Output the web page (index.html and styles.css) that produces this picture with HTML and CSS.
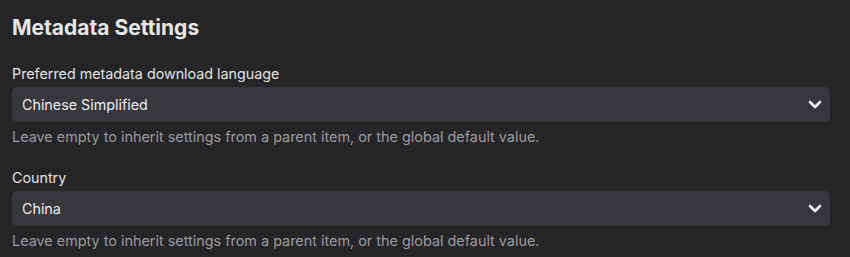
FILE: index.html
```html
<!DOCTYPE html>
<html lang="en">
<head>
    <meta charset="UTF-8">
    <title>Metadata Settings</title>
    <link rel="stylesheet" href="styles.css">
</head>
<body>
    <div class="settings">
        <h2 class="settings-title">Metadata Settings</h2>

        <div class="field">
            <label class="field-label" for="language">Preferred metadata download language</label>
            <div class="select-wrap">
                <select id="language" class="field-select">
                    <option>Chinese Simplified</option>
                </select>
                <svg class="select-arrow" width="14" height="9" viewBox="0 0 14 9">
                    <path d="M2 2 L7 7 L12 2" fill="none" stroke="#f2f2f2" stroke-width="2.6" stroke-linecap="round" stroke-linejoin="round"/>
                </svg>
            </div>
            <div class="field-help">Leave empty to inherit settings from a parent item, or the global default value.</div>
        </div>

        <div class="field">
            <label class="field-label" for="country">Country</label>
            <div class="select-wrap">
                <select id="country" class="field-select">
                    <option>China</option>
                </select>
                <svg class="select-arrow" width="14" height="9" viewBox="0 0 14 9">
                    <path d="M2 2 L7 7 L12 2" fill="none" stroke="#f2f2f2" stroke-width="2.6" stroke-linecap="round" stroke-linejoin="round"/>
                </svg>
            </div>
            <div class="field-help">Leave empty to inherit settings from a parent item, or the global default value.</div>
        </div>
    </div>
</body>
</html>
```

FILE: styles.css
```css
body {
    margin: 0;
    background-color: #252528;
    font-family: Inter, "Noto Sans", sans-serif;
    color: #e8e8e8;
}

.settings {
    padding: 14px 20px 0 12px;
}

.settings-title {
    margin: 0 0 22px 0;
    font-size: 21px;
    font-weight: 700;
    line-height: 28px;
    color: #e6e6e6;
}

.field {
    margin-bottom: 21px;
}

.field-label {
    display: block;
    font-size: 14.3px;
    line-height: 20px;
    margin-bottom: 3px;
    color: #e2e2e2;
}

.select-wrap {
    position: relative;
}

.field-select {
    display: block;
    width: 100%;
    height: 35px;
    padding: 0 10px;
    border: none;
    border-radius: 5px;
    background-color: #37373c;
    color: #ececec;
    font-family: inherit;
    font-size: 14.3px;
    appearance: none;
    -webkit-appearance: none;
}

.select-arrow {
    position: absolute;
    right: 8px;
    top: 13px;
}

.field-help {
    margin-top: 5px;
    font-size: 14.4px;
    line-height: 20px;
    color: #9a9a9e;
}
```
